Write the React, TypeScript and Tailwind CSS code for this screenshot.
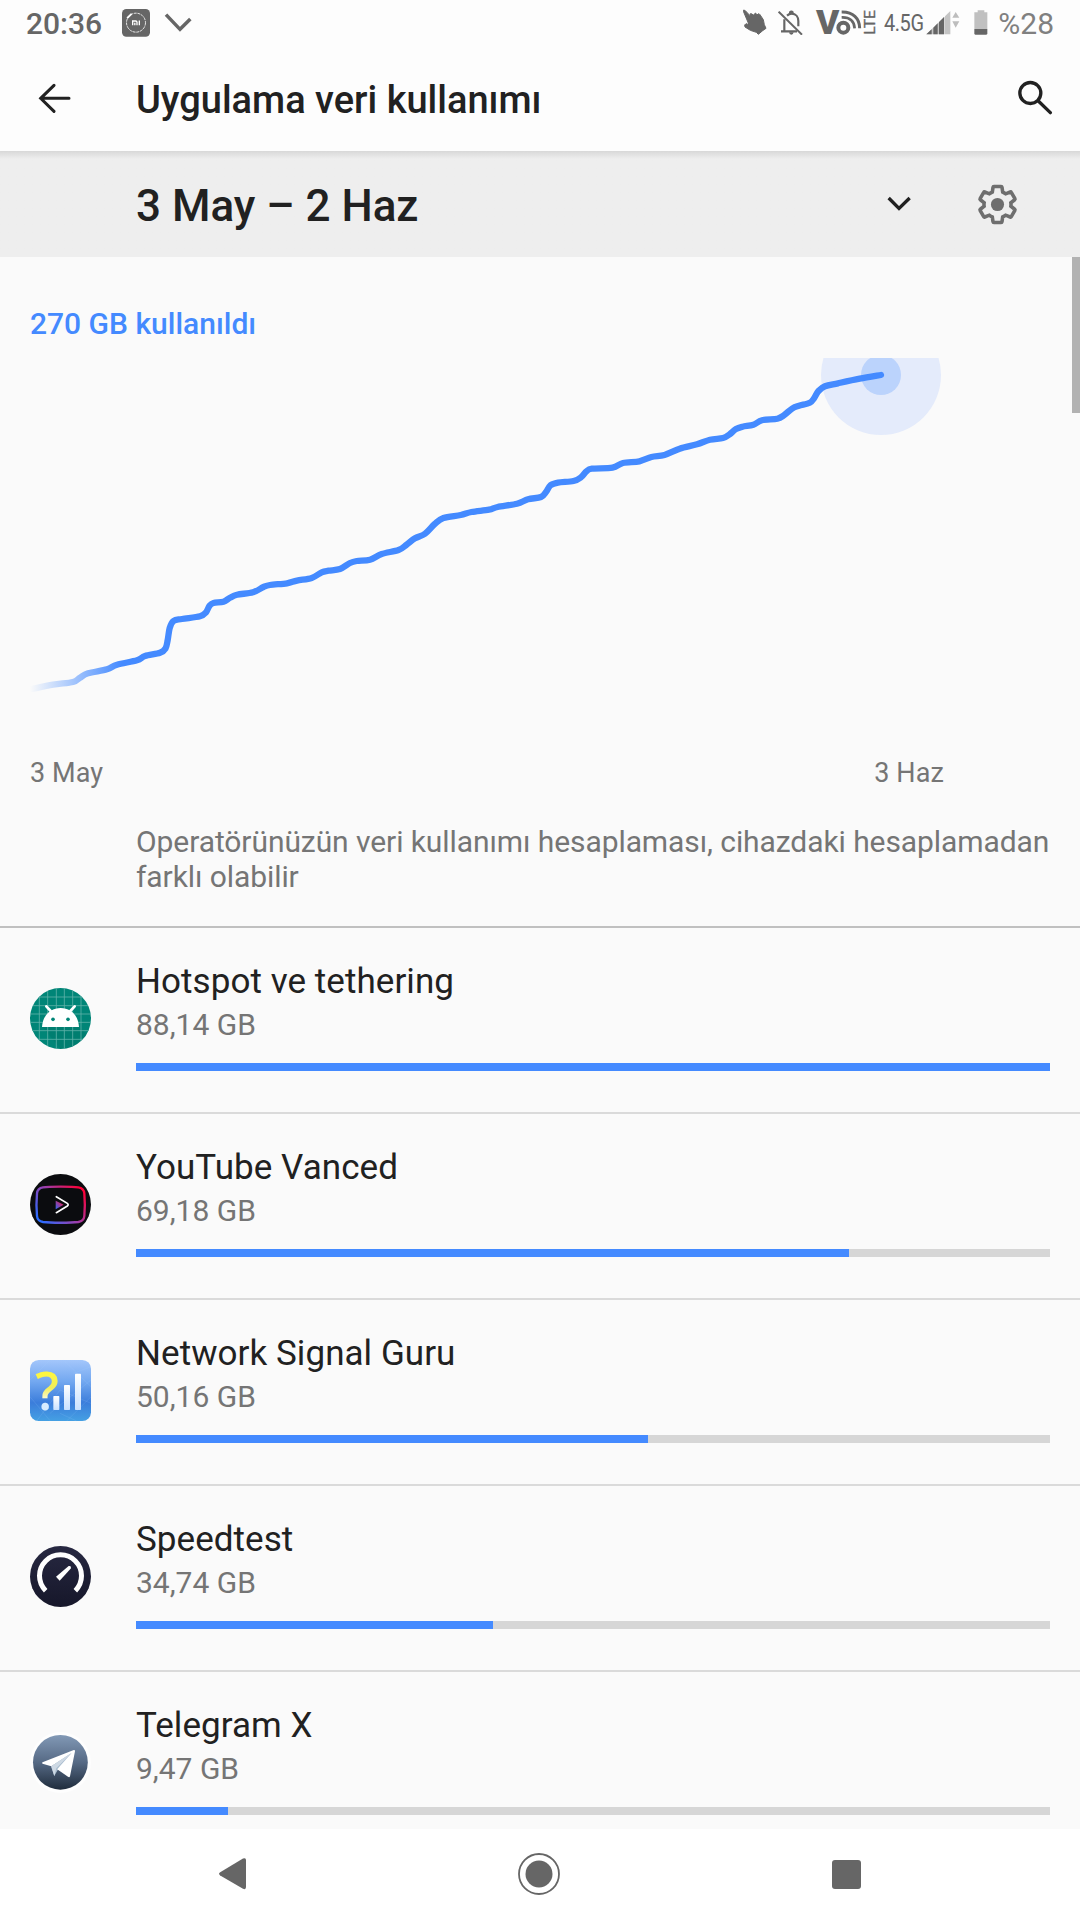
import type { ReactNode } from 'react';

type AppUsage = {
  name: string;
  usage: string;
  percent: number;
  icon: ReactNode;
};

// x/y of the usage curve, in page pixels
const points = [
  [32, 689], [53, 684.7], [73, 682], [80, 677.7], [88, 673.3], [107, 669.3], [117, 664.7], [137, 660.3],
  [145, 656], [160, 652.7], [165.5, 648.5], [167.7, 640], [169.7, 628], [173.5, 621], [182, 619],
  [200, 616.3], [206, 612.3], [209.5, 605.7], [213.5, 603], [223.5, 601.7], [230, 597.8], [237, 594.7],
  [253, 592.3], [263.5, 587], [270, 585], [287, 583.3], [297, 580.6], [311.7, 578], [321.7, 572.3],
  [328.5, 570.7], [340, 569], [350, 563], [356.7, 561], [370, 559.7], [381.7, 554], [398.5, 550],
  [406.7, 544.6], [415, 538.3], [425, 533.7], [434.7, 524], [443.4, 518], [460.7, 515], [471.5, 512],
  [489, 509.7], [497.6, 507], [517, 503.7], [528, 499.3], [541, 497], [546, 492], [550.5, 485.3],
  [558, 482.7], [573.5, 481], [581, 477.3], [586.5, 471.3], [592, 468.7], [612.5, 467.7], [623, 463],
  [639.4, 461.3], [651.5, 457], [664.5, 455], [679.7, 448.7], [697, 444.3], [710, 439.7], [723, 438],
  [729.6, 434.3], [736, 429], [742.6, 426.7], [753.4, 424.7], [762, 420.3], [777.3, 418.7],
  [783.8, 415.3], [792.5, 408.3], [799, 405.7], [809.8, 402.7], [814, 398.3], [818.5, 391],
  [825, 386.3], [838, 383.3], [859.7, 378.7], [881, 375],
];

function smoothPath(pts: number[][]) {
  let d = `M${pts[0][0]} ${pts[0][1]}`;
  for (let i = 0; i < pts.length - 1; i++) {
    const p0 = pts[i - 1] || pts[i];
    const p1 = pts[i];
    const p2 = pts[i + 1];
    const p3 = pts[i + 2] || p2;
    d += ` C${p1[0] + (p2[0] - p0[0]) / 6} ${p1[1] + (p2[1] - p0[1]) / 6} ${p2[0] - (p3[0] - p1[0]) / 6} ${p2[1] - (p3[1] - p1[1]) / 6} ${p2[0]} ${p2[1]}`;
  }
  return d;
}

function AndroidIcon() {
  return (
    <svg width="61" height="61" viewBox="0 0 183 183">
      <defs>
        <clipPath id="android-clip">
          <circle cx="91.5" cy="91.5" r="91.5" />
        </clipPath>
      </defs>
      <g clipPath="url(#android-clip)">
        <rect width="183" height="183" fill="#008577" />
        <path d="M37 117H148L183 152V183H92Z" fill="#000" opacity="0.05" />
        <path
          d="M28 0V183M53 0V183M79 0V183M103 0V183M128 0V183M153 0V183M0 27H183M0 53H183M0 78H183M0 103H183M0 128H183M0 154H183"
          stroke="#5fb3a9"
          strokeWidth="2.4"
        />
      </g>
      <path d="M49 55L62 69M134 55L121 69" stroke="#fff" strokeWidth="8" strokeLinecap="round" />
      <path d="M36 117C38 82 62 60 92 60S145 82 147 117Z" fill="#fff" />
      <circle cx="69" cy="94" r="5.5" fill="#008577" />
      <circle cx="114" cy="94" r="5.5" fill="#008577" />
    </svg>
  );
}

function VancedIcon() {
  return (
    <svg width="61" height="61" viewBox="0 0 183 183">
      <defs>
        <linearGradient id="vanced" gradientUnits="userSpaceOnUse" x1="30" y1="140" x2="145" y2="35">
          <stop offset="0" stopColor="#2a6cff" />
          <stop offset="0.5" stopColor="#9a3fae" />
          <stop offset="1" stopColor="#ff0038" />
        </linearGradient>
        <linearGradient id="vanced-play" x1="0" y1="1" x2="1" y2="0">
          <stop offset="0" stopColor="#2a6cff" />
          <stop offset="0.8" stopColor="#e0205c" />
        </linearGradient>
      </defs>
      <circle cx="91.5" cy="91.5" r="91.5" fill="#0b0c0f" />
      <path
        d="M92 38C120 38 133 38 145 40C157 42 162 47 163 58C165 80 165 104 163 126C162 137 157 142 145 144C120 147 64 147 39 144C27 142 22 137 21 126C19 104 19 80 21 58C22 47 27 42 39 40C51 38 64 38 92 38Z"
        fill="none"
        stroke="url(#vanced)"
        strokeWidth="7"
      />
      <path d="M77 80L101 92L77 106Z" fill="url(#vanced-play)" />
      <path d="M79 68L112 88Q117 92 112 96L79 116" fill="none" stroke="#fff" strokeWidth="5" strokeLinecap="round" />
    </svg>
  );
}

function SignalGuruIcon() {
  return (
    <svg className="overflow-visible" width="61" height="61" viewBox="0 0 183 183">
      <defs>
        <linearGradient id="guru" x1="0" y1="0" x2="0" y2="1">
          <stop offset="0" stopColor="#a3c6fb" />
          <stop offset="0.35" stopColor="#73a8f0" />
          <stop offset="0.7" stopColor="#3b7ddb" />
          <stop offset="1" stopColor="#45a0e3" />
        </linearGradient>
        <linearGradient id="guru-mark" gradientUnits="userSpaceOnUse" x1="0" y1="30" x2="0" y2="150">
          <stop offset="0" stopColor="#fff83a" />
          <stop offset="0.45" stopColor="#f2ee5a" />
          <stop offset="0.74" stopColor="#fdfbd8" />
          <stop offset="0.78" stopColor="#d8ecff" />
          <stop offset="1" stopColor="#d8ecff" />
        </linearGradient>
        <linearGradient id="guru-bar" x1="0" y1="0" x2="0" y2="1">
          <stop offset="0" stopColor="#fff" />
          <stop offset="1" stopColor="#c9e1ff" />
        </linearGradient>
      </defs>
      <rect width="183" height="183" rx="26" fill="url(#guru)" />
      <path
        d="M0 110L60 182M20 183L90 90L183 130M60 160L183 60M110 183L183 110M100 0L183 80M130 40L183 20M0 60L60 0M90 160L140 183"
        stroke="#a9d2ff"
        strokeWidth="1.5"
        opacity="0.28"
        fill="none"
      />
      <text x="16" y="149" fontSize="156" fontWeight="600" fill="url(#guru-mark)" className="font-['Open_Sans',sans-serif]">?</text>
      <rect x="70" y="108" width="18" height="42" rx="2" fill="url(#guru-bar)" />
      <rect x="102" y="75" width="18" height="75" rx="2" fill="url(#guru-bar)" />
      <rect x="135" y="41" width="18" height="109" rx="2" fill="url(#guru-bar)" />
    </svg>
  );
}

function SpeedtestIcon() {
  return (
    <svg width="61" height="61" viewBox="0 0 183 183">
      <defs>
        <linearGradient id="speed" x1="0" y1="0" x2="0" y2="1">
          <stop offset="0" stopColor="#272841" />
          <stop offset="1" stopColor="#16172a" />
        </linearGradient>
      </defs>
      <circle cx="91.5" cy="91.5" r="91.5" fill="url(#speed)" />
      <path d="M47 134A63 63 0 1 1 136 134" fill="none" stroke="#fff" strokeWidth="15" />
      <path d="M78 92L89 104L123 67Q124 58 116 60Z" fill="#fff" />
    </svg>
  );
}

function TelegramIcon() {
  return (
    <svg width="61" height="61" viewBox="0 0 61 61">
      <defs>
        <linearGradient id="tg" x1="0" y1="0" x2="0" y2="1">
          <stop offset="0" stopColor="#8299b6" />
          <stop offset="0.5" stopColor="#566a85" />
          <stop offset="1" stopColor="#1f2c3c" />
        </linearGradient>
      </defs>
      <circle cx="30.5" cy="30.5" r="30.5" fill="#fff" opacity="0.7" />
      <circle cx="30.4" cy="30.3" r="27.4" fill="url(#tg)" />
      <path d="M21 34.5L24.3 44L28 37.5L44 18.5Z" fill="#a9bdcf" />
      <path d="M12.5 30.2L43.8 18Q45.2 17.8 45 19.3L40 44.3Q39.5 45.8 38 44.8L27.2 37.3L41.5 21L21.3 34.3L12.6 31.8Q11.5 31 12.5 30.2Z" fill="#fff" />
      <path d="M21.3 34.3L41.5 21L26.3 36.2L24.3 44Z" fill="#ced9e4" />
    </svg>
  );
}

const apps: AppUsage[] = [
  { name: 'Hotspot ve tethering', usage: '88,14 GB', percent: 100, icon: <AndroidIcon /> },
  { name: 'YouTube Vanced', usage: '69,18 GB', percent: 78, icon: <VancedIcon /> },
  { name: 'Network Signal Guru', usage: '50,16 GB', percent: 56, icon: <SignalGuruIcon /> },
  { name: 'Speedtest', usage: '34,74 GB', percent: 39.1, icon: <SpeedtestIcon /> },
  { name: 'Telegram X', usage: '9,47 GB', percent: 10.1, icon: <TelegramIcon /> },
];

function StatusBar() {
  return (
    <div className="flex h-12 shrink-0 items-start pt-[7px] pl-[26px] pr-[26px] text-[#666]">
      <span className="w-24 text-[30px] leading-[34px] font-medium">20:36</span>
      <svg className="mt-[2px]" width="28" height="28" viewBox="0 0 84 84">
        <rect width="84" height="83" rx="13" fill="#666" />
        <circle cx="42" cy="41" r="28.5" fill="none" stroke="#fff" strokeWidth="2.5" strokeDasharray="9 2.5" />
        <path d="M17 26L27 16" stroke="#fff" strokeWidth="6" strokeLinecap="round" />
        <path d="M32 49V36H41Q45 36 45 40V49M38.500 41V49M52 34.500V49" fill="none" stroke="#fff" strokeWidth="4" />
      </svg>
      <svg className="mt-[5px] ml-[14px]" width="28" height="22" viewBox="492 36 84 66">
        <path d="M498 44L540 88L571 57" fill="none" stroke="#666" strokeWidth="10.5" />
      </svg>

      <svg className="mt-[2px] ml-auto" width="24" height="27" viewBox="66 26 72 81">
        <path
          d="M68 29L73 31L87 46L88 40L91 40L97 44L104 38L107 44L114 40L117 43L127 58L130 73L135 84L125 91L112 102L106 96L88 90L72 80L71 74L75 70L84 73L68 35Z"
          fill="#666"
          stroke="#666"
          strokeWidth="3"
          strokeLinejoin="round"
        />
      </svg>
      <svg className="mt-[3px] ml-[11px]" width="25" height="25" viewBox="170 29 75 75">
        <path d="M189 57V92M179 93H227M197 46Q204 40 211 40C224 40 231 50 231 62V78" fill="none" stroke="#666" strokeWidth="6.5" />
        <path d="M203 42V34Q210 27 217 34V42ZM203 96H217Q216 103 210 103T203 96Z" fill="#666" />
        <path d="M172 34L242 103" stroke="#666" strokeWidth="6" />
      </svg>
      <svg className="mt-[3px] ml-[13px] overflow-visible" width="60" height="25" viewBox="285 29 180 75">
        <text x="285" y="102" fontSize="100" fontWeight="900" fill="#666" textLength="70" lengthAdjust="spacingAndGlyphs">V</text>
        <circle cx="367" cy="82" r="15" fill="none" stroke="#666" strokeWidth="12" />
        <path d="M362 35C396 34 416 54 416 84" fill="none" stroke="#666" strokeWidth="9" />
        <path d="M362 51C386 50 400 62 401 84" fill="none" stroke="#666" strokeWidth="8" />
        <text transform="translate(461 103) rotate(-90)" fontSize="46" fill="#666" stroke="#666" textLength="74" lengthAdjust="spacingAndGlyphs">LTE</text>
      </svg>
      <span className="mt-px ml-[8px] w-[42px] text-[24px] leading-[30px] tracking-[-0.5px]">
        <span className="inline-block origin-left scale-x-[0.83]">4.5G</span>
      </span>
      <svg className="mt-[3px]" width="35" height="25" viewBox="617 29 105 75">
        <path d="M674 48L690 32V102H674Z" fill="#c4c4c4" />
        <path d="M618 102L673 49V102Z" fill="#c4c4c4" />
        <path d="M618 102L634 87V102ZM639 82L652 69V102H639ZM656 65L671 50V102H656Z" fill="#666" />
        <path d="M696 52L706 35L717 52ZM696 63L706 82L717 63Z" fill="#bdbdbd" />
      </svg>
      <svg className="mt-[3px] ml-[13px]" width="14" height="25" viewBox="764 30 42 75">
        <path d="M765 37H775V31H795V37H804V87H765Z" fill="#c0c0c0" />
        <path d="M765 87H804V102L801 104H768L765 102Z" fill="#666" />
      </svg>
      <span className="ml-[10px] text-[30px] leading-[34px] text-[#808080]">%28</span>
    </div>
  );
}

function Toolbar() {
  return (
    <header className="flex h-[103px] shrink-0 items-center pr-[27px] pl-[38px] text-[#212121]">
      <svg className="mb-[3px]" width="34" height="30" viewBox="114 250 102 90">
        <path d="M122 296H207M162 257L122 296L162 335" fill="none" stroke="#212121" strokeWidth="9" strokeLinecap="round" />
      </svg>
      <h1 className="mt-px ml-[64px] text-[38px] leading-[44px] font-medium">Uygulama veri kullanımı</h1>
      <svg className="mb-[4px] ml-auto" width="35" height="35" viewBox="892 240 105 105">
        <circle cx="929" cy="279" r="31.5" fill="none" stroke="#212121" strokeWidth="10" />
        <path d="M953 303L989 338" stroke="#212121" strokeWidth="10" strokeLinecap="round" />
      </svg>
    </header>
  );
}

function CycleBar() {
  return (
    <div className="flex h-[106px] shrink-0 items-center bg-[#eee] bg-linear-to-b from-[#d8d8d8] to-[#eee] to-[8px] pr-[60px] pl-[136px] text-[#212121]">
      <span className="pt-[4px] text-[44px] leading-[50px] font-medium">3 May – 2 Haz</span>
      <svg className="ml-auto" width="24" height="16" viewBox="502 589 72 48">
        <path d="M507 595L538 626L570 595" fill="none" stroke="#212121" strokeWidth="10" />
      </svg>
      <svg className="ml-[64px]" width="45" height="45" viewBox="0 0 24 24">
        <path
          d="M19.14 12.94c.04-.3.06-.61.06-.94 0-.32-.02-.64-.07-.94l2.03-1.58c.18-.14.23-.41.12-.61l-1.92-3.32c-.12-.22-.37-.29-.59-.22l-2.39.96c-.5-.38-1.03-.7-1.62-.94L14.4 2.81c-.04-.24-.24-.41-.48-.41h-3.84c-.24 0-.43.17-.47.41L9.25 5.35C8.66 5.59 8.12 5.92 7.63 6.29L5.24 5.33c-.22-.08-.47 0-.59.22L2.74 8.87c-.12.21-.08.47.12.61l2.03 1.58c-.05.3-.09.63-.09.94s.02.64.07.94l-2.03 1.58c-.18.14-.23.41-.12.61l1.92 3.32c.12.22.37.29.59.22l2.39-.96c.5.38 1.03.7 1.62.94l.36 2.54c.05.24.24.41.48.41h3.84c.24 0 .44-.17.47-.41l.36-2.54c.59-.24 1.13-.56 1.62-.94l2.39.96c.22.08.47 0 .59-.22l1.92-3.32c.12-.22.07-.47-.12-.61L19.14 12.94z"
          fill="none"
          stroke="#6e6e6e"
          strokeWidth="1.9"
        />
        <circle cx="12" cy="12" r="3.5" fill="#6e6e6e" />
      </svg>
    </div>
  );
}

function UsageChart() {
  return (
    <section className="flex shrink-0 flex-col">
      <p className="mt-[49px] ml-[30px] text-[30px] leading-[35px] font-medium text-[#448aff]">270 GB kullanıldı</p>
      <svg className="mt-[17px]" width="1080" height="382" viewBox="0 358 1080 382">
        <defs>
          <linearGradient id="fade" gradientUnits="userSpaceOnUse" x1="30" y1="0" x2="122" y2="0">
            <stop offset="0" stopColor="#448aff" stopOpacity="0" />
            <stop offset="1" stopColor="#448aff" />
          </linearGradient>
        </defs>
        <circle cx="881" cy="375" r="60" fill="#e4ebfb" />
        <circle cx="881" cy="375" r="20" fill="#bbd3fc" />
        <path d={smoothPath(points)} fill="none" stroke="url(#fade)" strokeWidth="6.300" strokeLinecap="round" strokeLinejoin="round" />
      </svg>
      <div className="mt-[17px] flex justify-between pr-[136px] pl-[30px] text-[27px] leading-8 tracking-[0.1px] text-[#757575]">
        <span>3 May</span>
        <span>3 Haz</span>
      </div>
      <p className="mt-[35px] h-[102px] pl-[136px] text-[30px] leading-[35px] tracking-[-0.08px] whitespace-nowrap text-[#757575]">
        Operatörünüzün veri kullanımı hesaplaması, cihazdaki hesaplamadan
        <br />
        farklı olabilir
      </p>
    </section>
  );
}

function AppRow({ app }: { app: AppUsage }) {
  return (
    <li className="flex h-[186px] shrink-0 border-t-2 border-[#dadada] pr-[30px] pl-[30px] first:border-[#c0c0c0]">
      <div className="w-[106px] pt-[60px]">{app.icon}</div>
      <div className="flex-1 pt-[33px]">
        <p className="text-[35px] leading-[41px] tracking-[0.06px] text-[#212121]">{app.name}</p>
        <p className="mt-[5px] text-[30px] leading-[35px] text-[#757575]">{app.usage}</p>
        <div className="mt-[21px] h-2 bg-[#d6d6d6]">
          <div className="h-2 bg-[#448aff]" style={{ width: `${app.percent}%` }} />
        </div>
      </div>
    </li>
  );
}

function NavBar() {
  return (
    <nav className="flex h-[91px] shrink-0 items-center justify-between bg-white pr-[219px] pb-px pl-[219px]">
      <svg width="28" height="34" viewBox="0 0 28 34">
        <path d="M1.2 15.2L24 1.6Q27 0.4 27 3V30Q27 33 24 31.8L1.2 18.4Q-1.2 16.8 1.2 15.2Z" fill="#666" />
      </svg>
      <svg className="mr-[2px]" width="44" height="44" viewBox="0 0 44 44">
        <circle cx="22" cy="22" r="20" fill="none" stroke="#666" strokeWidth="1.8" />
        <circle cx="22" cy="22" r="13.5" fill="#666" />
      </svg>
      <svg width="29" height="29" viewBox="0 0 29 29">
        <rect width="29" height="29" rx="3" fill="#666" />
      </svg>
    </nav>
  );
}

export default function App() {
  return (
    <main className="flex h-[1920px] w-[1080px] flex-col overflow-hidden bg-[#fdfdfd] font-[Roboto,sans-serif]">
      <StatusBar />
      <Toolbar />
      <CycleBar />
      <div className="relative flex h-[1572px] shrink-0 flex-col overflow-hidden bg-[#fafafa]">
        <UsageChart />
        <ul className="flex flex-col">
          {apps.map(app => (
            <AppRow key={app.name} app={app} />
          ))}
        </ul>
        {/* scroll indicator */}
        <div className="absolute top-0 right-0 h-[156px] w-2 bg-[#b2b2b2]" />
      </div>
      <NavBar />
    </main>
  );
}
